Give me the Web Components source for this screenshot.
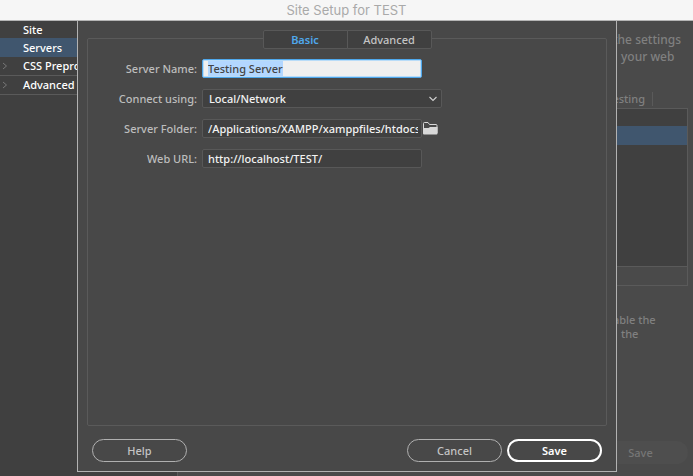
<!DOCTYPE html>
<html lang="en">
<head>
<meta charset="utf-8">
<title>Site Setup for TEST</title>
<style>
  :root {
    --bg: #4a4a4a;
    --dark: #404040;
    --line: #5a5a5a;
    --blue: #40566e;
    --accent: #4fa8ec;
  }
  body {
    margin: 0;
    background: var(--bg);
    color: #fff;
    font: 500 11px/14px "Noto Sans", "Open Sans", sans-serif;
  }
</style>
</head>
<body>
<site-setup heading="Site Setup for TEST">
  <site-nav slot="nav"></site-nav>
  <server-pane slot="pane"></server-pane>
  <server-dialog slot="dialog"></server-dialog>
</site-setup>

<script>
class SiteSetup extends HTMLElement {
  constructor() {
    super();
    this.attachShadow({ mode: "open" });
    this.shadowRoot.innerHTML = `
      <style>
        :host {
          display: flex;
          flex-direction: column;
          height: 100vh;
          overflow: hidden;
        }
        header {
          height: 20px;
          background: #f6f6f6;
          border-bottom: 1px solid #b5b5b5;
          color: #a9a9a9;
          text-align: center;
        }
        h1 {
          margin: 0;
          font: 400 13px/21px Inter, sans-serif;
        }
        .body {
          flex: 1;
          display: flex;
          position: relative;
          min-height: 0;
        }
      </style>
      <header><h1>${this.getAttribute("heading")}</h1></header>
      <div class="body">
        <slot name="nav"></slot>
        <slot name="pane"></slot>
        <slot name="dialog"></slot>
      </div>
    `;
  }
}
customElements.define("site-setup", SiteSetup);

class SiteNav extends HTMLElement {
  constructor() {
    super();
    this.attachShadow({ mode: "open" });
    this.items = [
      { text: "Site" },
      { text: "Servers", selected: true },
      { text: "CSS Preprocessors", group: true },
      { text: "Advanced Settings", group: true },
    ];
    this.render();
  }

  render() {
    this.shadowRoot.innerHTML = `
      <style>
        :host {
          display: block;
          flex: 0 0 177px;
          background: var(--dark);
          border-right: 1px solid var(--line);
        }
        ul {
          margin: 0;
          padding: 0;
          list-style: none;
        }
        li {
          box-sizing: border-box;
          display: flex;
          align-items: center;
          height: 19px;
        }
        li:first-child {
          height: 17px;
        }
        li.selected {
          background: var(--blue);
        }
        li.group {
          border-bottom: 1px solid var(--line);
        }
        .arrow {
          flex: 0 0 23px;
          display: flex;
        }
        svg {
          margin-left: 2px;
        }
      </style>
      <ul>
        ${this.items
          .map(
            (item) => `
          <li class="${item.selected ? "selected" : ""} ${item.group ? "group" : ""}">
            <span class="arrow">${
              item.group
                ? `<svg width="6" height="8" viewBox="0 0 6 8" fill="none" stroke="#777"><path d="M1 1l3.5 3L1 7"/></svg>`
                : ""
            }</span>${item.text}
          </li>`
          )
          .join("")}
      </ul>
    `;
  }
}
customElements.define("site-nav", SiteNav);

class ServerPane extends HTMLElement {
  constructor() {
    super();
    this.attachShadow({ mode: "open" });
    this.shadowRoot.innerHTML = `
      <style>
        :host {
          flex: 1;
          display: flex;
          flex-direction: column;
          align-items: flex-end;
          padding: 10px 5px 12px 0;
          color: #808080;
          white-space: nowrap;
        }
        p {
          margin: 0;
          width: 75px;
        }
        .intro {
          font-size: 12px;
          line-height: 17px;
        }
        .intro span, .note span {
          display: block;
        }
        p span + span {
          padding-left: 8px;
        }
        .head {
          height: 14px;
          margin: 27px 35px 2px 0;
          padding-right: 7px;
          border-right: 1px solid var(--line);
        }
        .rows {
          width: 100px;
          height: 157px;
          background: var(--dark);
          border: 1px solid var(--line);
        }
        .row {
          height: 17px;
        }
        .row.selected {
          height: 19px;
          background: var(--blue);
        }
        .tools {
          width: 100px;
          height: 18px;
          border: 1px solid var(--line);
          border-top: 0;
        }
        .note {
          margin-top: 27px;
          line-height: 14px;
        }
        button {
          margin-top: auto;
          width: 95px;
          height: 23px;
          border: 0;
          border-radius: 12px;
          background: #4e4e4e;
          color: #767676;
          font: inherit;
        }
      </style>
      <p class="intro"><span>the settings</span><span>your web</span></p>
      <div class="head">Testing</div>
      <div class="rows">
        <div class="row"></div>
        <div class="row selected"></div>
      </div>
      <div class="tools"></div>
      <p class="note"><span>able the</span><span>the</span></p>
      <button type="button" disabled>Save</button>
    `;
  }
}
customElements.define("server-pane", ServerPane);

class FieldRow extends HTMLElement {
  constructor() {
    super();
    this.attachShadow({ mode: "open" });
    const value = this.getAttribute("value");
    const isSelect = this.getAttribute("type") === "select";
    this.shadowRoot.innerHTML = `
      <style>
        :host {
          display: flex;
          align-items: center;
        }
        label {
          flex: 0 0 109px;
          margin-right: 5px;
          color: #bdbdbd;
          text-align: right;
        }
        input, select {
          box-sizing: border-box;
          width: 220px;
          height: 19px;
          margin: 0;
          padding: 0 5px;
          border: 1px solid #585858;
          border-radius: 2px;
          background: var(--dark);
          color: #f2f2f2;
          font: inherit;
          outline: none;
          appearance: none;
        }
        input {
          padding-right: 3px;
        }
        .select {
          display: grid;
          align-items: center;
        }
        .select > * {
          grid-area: 1 / 1;
        }
        select {
          width: 240px;
          padding-left: 6px;
        }
        .select svg {
          justify-self: end;
          margin-right: 5px;
          pointer-events: none;
        }
        input:focus {
          border-color: var(--accent);
          box-shadow: inset 0 0 0 1px #b9dcf8;
          background: #f0f0f0;
          color: #444;
        }
        input::selection {
          background: #b3d7ff;
          color: #444;
        }
      </style>
      <label for="field">${this.getAttribute("label")}</label>
      ${
        isSelect
          ? `<div class="select">
              <select id="field"><option>${value}</option></select>
              <svg width="8" height="6" viewBox="0 0 8 6" fill="none" stroke="#d0d0d0" stroke-width="1.1"><path d="M.5 1L4 4.5 7.5 1"/></svg>
            </div>`
          : `<input id="field" type="text" value="${value}">`
      }
      <slot></slot>
    `;
  }

  select() {
    const input = this.shadowRoot.querySelector("#field");
    input.focus();
    input.select();
  }
}
customElements.define("field-row", FieldRow);

class PillButton extends HTMLElement {
  constructor() {
    super();
    this.attachShadow({ mode: "open" });
    this.shadowRoot.innerHTML = `
      <style>
        :host {
          display: block;
        }
        button {
          display: block;
          width: 95px;
          height: 23px;
          padding: 0;
          border: 1px solid #b0b0b0;
          border-radius: 12px;
          background: none;
          color: #c4c4c4;
          font: inherit;
        }
        :host([primary]) button {
          border: 2px solid #fff;
          color: #fff;
          font-weight: 600;
        }
      </style>
      <button type="button"><slot></slot></button>
    `;
  }
}
customElements.define("pill-button", PillButton);

class ServerDialog extends HTMLElement {
  constructor() {
    super();
    this.attachShadow({ mode: "open" });
    this.shadowRoot.innerHTML = `
      <style>
        :host {
          position: absolute;
          inset: 0 76px 4px 77px;
          box-sizing: border-box;
          display: flex;
          flex-direction: column;
          padding: 17px 9px 9px;
          background: #484848;
          border: 1px solid #b2b2b2;
          border-top: 0;
        }
        section {
          flex: 1;
          border: 1px solid var(--line);
          border-radius: 2px;
        }
        .tabs {
          display: flex;
          justify-content: center;
          margin-top: -9px;
        }
        .tabs button {
          box-sizing: border-box;
          width: 85px;
          height: 19px;
          padding: 0;
          border: 1px solid #585858;
          background: var(--dark);
          color: #c4c4c4;
          font: inherit;
        }
        .tabs button:first-child {
          border-radius: 2px 0 0 2px;
        }
        .tabs button + button {
          margin-left: -1px;
          border-radius: 0 2px 2px 0;
        }
        .tabs button[aria-selected="true"] {
          color: var(--accent);
          font-weight: 600;
        }
        .fields {
          display: grid;
          gap: 11px;
          margin-top: 10px;
        }
        .folder {
          display: flex;
          margin-left: 1px;
          padding: 0;
          border: 0;
          background: none;
        }
        footer {
          display: flex;
          gap: 5px;
          padding: 13px 5px 0;
        }
        footer pill-button:first-child {
          margin-right: auto;
        }
      </style>
      <section>
        <div class="tabs" role="tablist">
          <button type="button" role="tab" aria-selected="true">Basic</button>
          <button type="button" role="tab" aria-selected="false">Advanced</button>
        </div>
        <div class="fields">
          <field-row id="name" label="Server Name:" value="Testing Server"></field-row>
          <field-row label="Connect using:" type="select" value="Local/Network"></field-row>
          <field-row label="Server Folder:" value="/Applications/XAMPP/xamppfiles/htdocs/TEST/">
            <button class="folder" type="button" aria-label="Browse">
              <svg width="15" height="13" viewBox="0 0 15 13">
                <path d="M.5 11V1.5Q.5.5 1.5.5H5l1.5 2H13q1 0 1 1V11" fill="none" stroke="#d8d8d8"/>
                <path d="M0 6h5.500l1.500-1h7.500v6.500q0 1-1 1h-12.500q-1 0-1-1z" fill="#d8d8d8"/>
              </svg>
            </button>
          </field-row>
          <field-row label="Web URL:" value="http://localhost/TEST/"></field-row>
        </div>
      </section>
      <footer>
        <pill-button>Help</pill-button>
        <pill-button>Cancel</pill-button>
        <pill-button primary>Save</pill-button>
      </footer>
    `;
  }

  connectedCallback() {
    this.shadowRoot.querySelector("#name").select();
  }
}
customElements.define("server-dialog", ServerDialog);
</script>
</body>
</html>
